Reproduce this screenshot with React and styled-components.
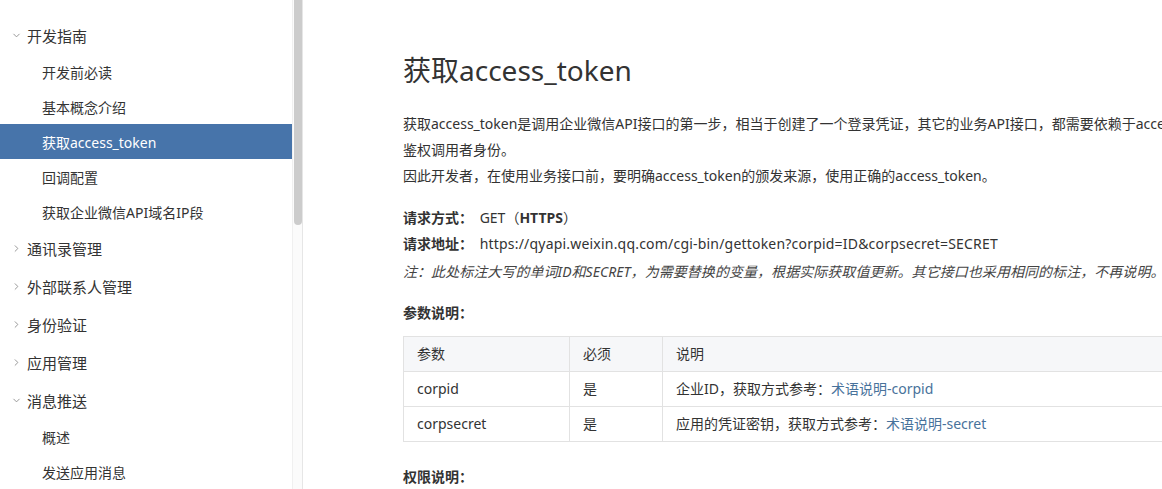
import React from "react";
import styled, { createGlobalStyle } from "styled-components";
import { ChevronDown, ChevronRight } from "lucide-react";

const GlobalStyle = createGlobalStyle`
  html, body {
    margin: 0;
    padding: 0;
    height: 100%;
    overflow: hidden;
    background: #fff;
  }
  body {
    font-family: "Noto Sans", "Noto Sans CJK SC", sans-serif;
    color: #333;
  }
`;

const Page = styled.div`
  display: flex;
  height: 100vh;
`;

const Sidebar = styled.nav`
  position: relative;
  flex: 0 0 303px;
  box-sizing: border-box;
  border-right: 1px solid #e6e6e6;
  overflow: hidden;
`;

const MenuList = styled.div`
  padding: 16px 8px 20px 0;
`;

const ScrollTrack = styled.div`
  position: absolute;
  top: 0;
  right: 0;
  bottom: 0;
  width: 9px;
  background: #fbfbfb;
  border-left: 1px solid #f0f0f0;
`;

const ScrollThumb = styled.div`
  margin-left: 1px;
  width: 8px;
  height: 225px;
  background: #cccccc;
  border-radius: 0 0 4px 4px;
`;

const Group = styled.div`
  display: flex;
  align-items: center;
  height: 38px;
  padding-left: 11px;
  font-size: 15px;
  color: #333;
  gap: 5px;

  svg {
    color: #8f8f8f;
    flex: 0 0 auto;
  }
`;

const Item = styled.div`
  display: flex;
  align-items: center;
  height: 35px;
  padding-left: 42px;
  font-size: 14px;
  color: ${(p) => (p.$active ? "#fff" : "#333")};
  background: ${(p) => (p.$active ? "#4774aa" : "transparent")};
`;

const Main = styled.main`
  flex: 1;
  overflow: hidden;
  padding: 50px 0 0 100px;
`;

const Content = styled.div`
  width: 860px;
  font-size: 14px;
  line-height: 26px;
`;

const Title = styled.h1`
  margin: 0 0 21px;
  font-size: 28px;
  font-weight: normal;
  line-height: 40px;
  color: #333;
`;

const Para = styled.p`
  margin: 0;
  white-space: nowrap;
`;

const Block = styled.div`
  margin-top: 16px;
`;

const Label = styled.b`
  font-weight: bold;
  margin-right: 3px;
`;

const Url = styled.span`
  letter-spacing: 0.2px;
`;

const Note = styled.p`
  margin: 2px 0 0;
  font-style: italic;
  color: #444;
  white-space: nowrap;
  letter-spacing: 0.05px;
`;

const SectionTitle = styled.div`
  margin-top: ${(p) => p.$gap || 15}px;
  font-weight: bold;
`;

const Table = styled.table`
  margin-top: 10px;
  width: 100%;
  border-collapse: collapse;
  font-size: 14px;

  th, td {
    border: 1px solid #e2e2e2;
    height: 34px;
    padding: 0 13px;
    text-align: left;
    vertical-align: middle;
  }
  th {
    background: #f6f7f9;
    font-weight: normal;
  }
`;

const Link = styled.a`
  color: #48729b;
  text-decoration: none;
`;

const menu = [
  {
    title: "开发指南",
    open: true,
    items: ["开发前必读", "基本概念介绍", "获取access_token", "回调配置", "获取企业微信API域名IP段"],
  },
  { title: "通讯录管理" },
  { title: "外部联系人管理" },
  { title: "身份验证" },
  { title: "应用管理" },
  {
    title: "消息推送",
    open: true,
    items: [
      "概述",
      "发送应用消息",
      "更新模版卡片消息",
      "撤回应用消息",
      "接收消息与事件",
      "发送消息到群聊会话",
      "家校消息推送",
      "互联企业消息推送",
      "上下游消息推送",
    ],
  },
  { title: "素材管理" },
  { title: "OA" },
  { title: "效率工具" },
  { title: "企业支付" },
  { title: "企业互联" },
  { title: "上下游" },
  { title: "会话内容存档" },
  { title: "电子发票" },
];

export default function App() {
  return (
    <>
      <GlobalStyle />
      <Page>
        <Sidebar>
          <MenuList>
            {menu.map((g) => (
              <div key={g.title}>
                <Group>
                  {g.open ? (
                    <ChevronDown size={11} strokeWidth={2} />
                  ) : (
                    <ChevronRight size={11} strokeWidth={2} />
                  )}
                  {g.title}
                </Group>
                {g.open &&
                  g.items.map((it) => (
                    <Item key={it} $active={it === "获取access_token"}>
                      {it}
                    </Item>
                  ))}
              </div>
            ))}
          </MenuList>
          <ScrollTrack>
            <ScrollThumb />
          </ScrollTrack>
        </Sidebar>
        <Main>
          <Content>
            <Title>获取access_token</Title>
            <Para>
              获取access_token是调用企业微信API接口的第一步，相当于创建了一个登录凭证，其它的业务API接口，都需要依赖于access_token来
            </Para>
            <Para>鉴权调用者身份。</Para>
            <Para>因此开发者，在使用业务接口前，要明确access_token的颁发来源，使用正确的access_token。</Para>

            <Block>
              <Para>
                <Label>请求方式：</Label> GET（<b>HTTPS</b>）
              </Para>
              <Para>
                <Label>请求地址：</Label>{" "}
                <Url>https://qyapi.weixin.qq.com/cgi-bin/gettoken?corpid=ID&amp;corpsecret=SECRET</Url>
              </Para>
              <Note>
                注：此处标注大写的单词ID和SECRET，为需要替换的变量，根据实际获取值更新。其它接口也采用相同的标注，不再说明。
              </Note>
            </Block>

            <SectionTitle>参数说明：</SectionTitle>
            <Table>
              <colgroup>
                <col style={{ width: 166 }} />
                <col style={{ width: 93 }} />
                <col />
              </colgroup>
              <thead>
                <tr>
                  <th>参数</th>
                  <th>必须</th>
                  <th>说明</th>
                </tr>
              </thead>
              <tbody>
                <tr>
                  <td>corpid</td>
                  <td>是</td>
                  <td>
                    企业ID，获取方式参考：<Link href="#">术语说明-corpid</Link>
                  </td>
                </tr>
                <tr>
                  <td>corpsecret</td>
                  <td>是</td>
                  <td>
                    应用的凭证密钥，获取方式参考：<Link href="#">术语说明-secret</Link>
                  </td>
                </tr>
              </tbody>
            </Table>

            <SectionTitle $gap={22}>权限说明：</SectionTitle>
          </Content>
        </Main>
      </Page>
    </>
  );
}
